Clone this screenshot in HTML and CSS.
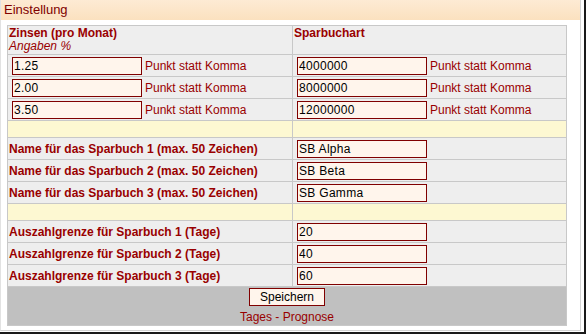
FILE: index.html
```html
<!DOCTYPE html>
<html lang="de">
<head>
    <meta charset="UTF-8">
    <title>Einstellung</title>
    <link rel="stylesheet" href="styles.css">
</head>
<body>
    <div class="frame">
        <div class="panel">
            <div class="panel-title">Einstellung</div>
            <table class="settings">
                <tr class="head">
                    <td class="col-left"><b>Zinsen (pro Monat)</b><br><i>Angaben %</i></td>
                    <td><b>Sparbuchart</b></td>
                </tr>
                <tr>
                    <td><input type="text" value="1.25"><span class="hint">Punkt statt Komma</span></td>
                    <td><input type="text" value="4000000"><span class="hint">Punkt statt Komma</span></td>
                </tr>
                <tr>
                    <td><input type="text" value="2.00"><span class="hint">Punkt statt Komma</span></td>
                    <td><input type="text" value="8000000"><span class="hint">Punkt statt Komma</span></td>
                </tr>
                <tr>
                    <td><input type="text" value="3.50"><span class="hint">Punkt statt Komma</span></td>
                    <td><input type="text" value="12000000"><span class="hint">Punkt statt Komma</span></td>
                </tr>
                <tr class="spacer"><td></td><td></td></tr>
                <tr>
                    <td class="label">Name für das Sparbuch 1 (max. 50 Zeichen)</td>
                    <td><input type="text" value="SB Alpha"></td>
                </tr>
                <tr>
                    <td class="label">Name für das Sparbuch 2 (max. 50 Zeichen)</td>
                    <td><input type="text" value="SB Beta"></td>
                </tr>
                <tr>
                    <td class="label">Name für das Sparbuch 3 (max. 50 Zeichen)</td>
                    <td><input type="text" value="SB Gamma"></td>
                </tr>
                <tr class="spacer"><td></td><td></td></tr>
                <tr>
                    <td class="label">Auszahlgrenze für Sparbuch 1 (Tage)</td>
                    <td><input type="text" value="20"></td>
                </tr>
                <tr>
                    <td class="label">Auszahlgrenze für Sparbuch 2 (Tage)</td>
                    <td><input type="text" value="40"></td>
                </tr>
                <tr>
                    <td class="label">Auszahlgrenze für Sparbuch 3 (Tage)</td>
                    <td><input type="text" value="60"></td>
                </tr>
                <tr class="foot">
                    <td colspan="2">
                        <button type="button">Speichern</button>
                        <a href="#">Tages - Prognose</a>
                    </td>
                </tr>
            </table>
        </div>
    </div>
</body>
</html>
```

FILE: styles.css
```css
/* General Styles */
body {
    margin: 0;
    padding: 0;
    background: #ffffff;
    font-family: "Liberation Sans", Arial, sans-serif;
    font-size: 12px;
    color: #990000;
}

.frame {
    width: 586px;
    height: 334px;
    box-sizing: border-box;
    border-right: 2px solid #1a1a1a;
    border-bottom: 2px solid #1a1a1a;
    background: #ffffff;
}

.panel {
    height: 331px;
    box-sizing: border-box;
    margin-right: 3px;
    border-left: 1px solid #e2e2e2;
    border-right: 1px solid #d4d4d4;
    border-bottom: 1px solid #d4d4d4;
}

.panel-title {
    height: 20px;
    line-height: 20px;
    padding-left: 3px;
    font-size: 13px;
    color: #800000;
    background: linear-gradient(#fdebd4, #fbe1bf);
}

.settings {
    margin: 5px 0 0 6px;
    width: 560px;
    border-collapse: collapse;
    border: 1px solid #bdbdbd;
}

.settings td {
    padding: 0 0 0 1px;
    height: 21px;
    background: #eeeeee;
    border: 1px solid #c8c8c8;
    vertical-align: middle;
    white-space: nowrap;
}

.settings .col-left {
    width: 283px;
}

.settings .head td {
    height: 27px;
    vertical-align: top;
    padding-top: 1px;
    line-height: 13px;
    color: #990000;
}

.settings .label {
    font-weight: bold;
}

.settings .spacer td {
    height: 16px;
    background: #fdf8d2;
}

.settings input {
    width: 130px;
    height: 18px;
    box-sizing: border-box;
    margin: 0 3px;
    padding: 0 1px;
    border: 1px solid #800000;
    background: #fff5ec;
    font-family: "Liberation Sans", Arial, sans-serif;
    font-size: 12px;
    letter-spacing: 0.3px;
    color: #000000;
    vertical-align: middle;
}

.hint {
    vertical-align: middle;
}

.settings .foot td {
    height: 37px;
    padding: 1px 0 0 0;
    background: #c0c0c0;
    text-align: center;
    vertical-align: top;
}

.foot button {
    display: block;
    margin: 0 auto;
    width: 76px;
    height: 18px;
    padding: 0;
    border: 1px solid #800000;
    background: #fff5ec;
    font-family: "Liberation Sans", Arial, sans-serif;
    font-size: 12px;
    color: #000000;
}

.foot a {
    display: block;
    margin-top: 4px;
    color: #990000;
    text-decoration: none;
}
```
